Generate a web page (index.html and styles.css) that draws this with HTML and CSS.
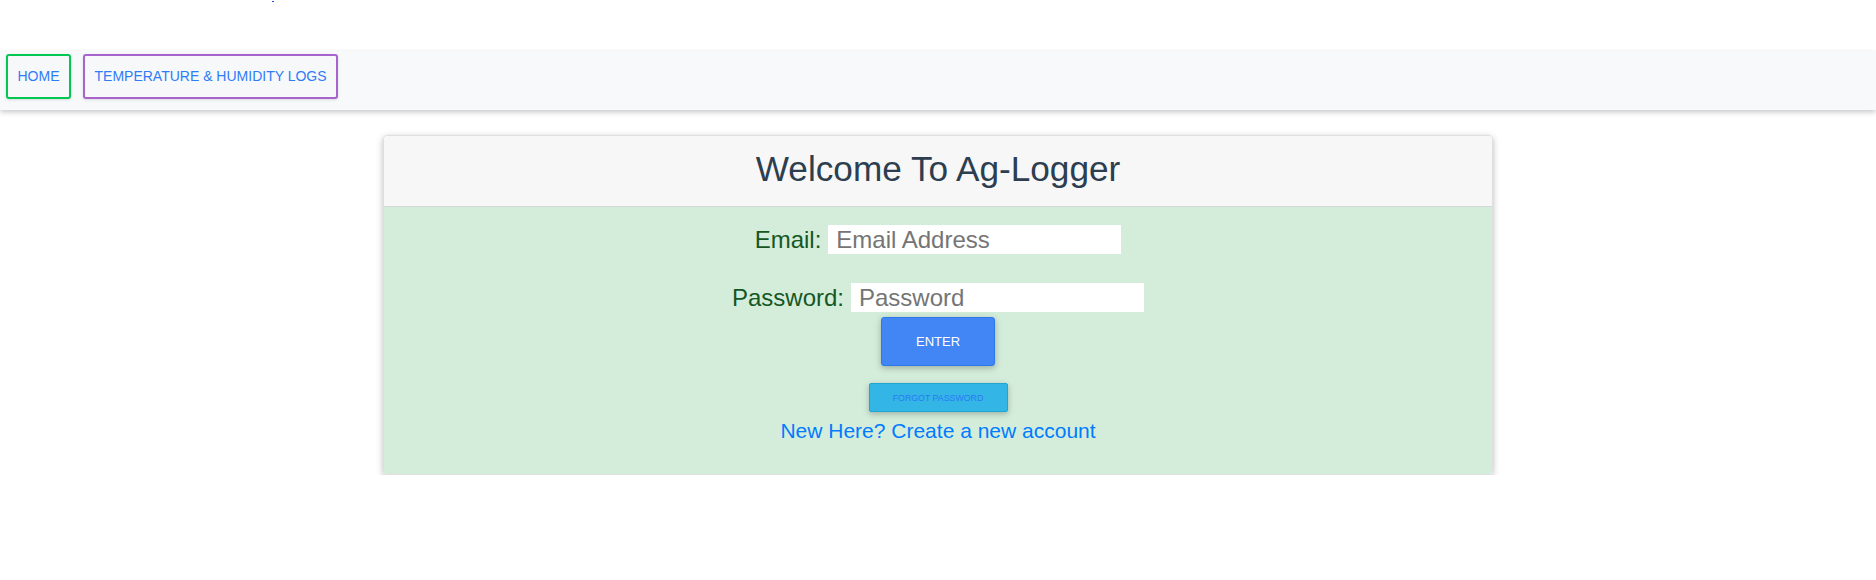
FILE: index.html
```html
<!DOCTYPE html>
<html lang="en">
<head>
<meta charset="utf-8">
<title>Ag-Logger</title>
<link rel="stylesheet" href="styles.css">
</head>
<body>
<div class="topbar"><span class="dot"></span></div>
<nav class="navbar">
  <a class="nav-btn nav-home" href="#">HOME</a>
  <a class="nav-btn nav-logs" href="#">TEMPERATURE &amp; HUMIDITY LOGS</a>
</nav>
<main class="container">
  <section class="card">
    <header class="card-header">
      <h1 class="title">Welcome To Ag-Logger</h1>
    </header>
    <form class="card-body">
      <div class="field">
        <label class="field-label" for="email">Email:</label>
        <input class="field-input" id="email" type="text" placeholder="Email Address">
      </div>
      <div class="field field-password">
        <label class="field-label" for="password">Password:</label>
        <input class="field-input" id="password" type="password" placeholder="Password">
      </div>
      <button class="btn-enter" type="button">ENTER</button>
      <button class="btn-forgot" type="button">FORGOT PASSWORD</button>
      <a class="new-link" href="#">New Here? Create a new account</a>
    </form>
  </section>
</main>
</body>
</html>
```

FILE: styles.css
```css
* {
  box-sizing: border-box;
}

body {
  margin: 0;
  background: #ffffff;
  font-family: "Liberation Sans", Arial, sans-serif;
}

.topbar {
  height: 51px;
  padding-left: 272px;
  padding-top: 1px;
}

.dot {
  display: block;
  width: 2px;
  height: 1px;
  background: #2b3bd6;
}

.navbar {
  height: 59px;
  background: #f8f9fa;
  display: flex;
  align-items: flex-start;
  gap: 12px;
  padding: 3px 0 0 6px;
  box-shadow: 0 2px 5px 0 rgba(0, 0, 0, 0.16), 0 3px 6px 0 rgba(0, 0, 0, 0.06);
  position: relative;
  z-index: 1;
}

.nav-btn {
  display: block;
  height: 45px;
  line-height: 41px;
  padding: 0 9.5px;
  border: 2px solid;
  border-radius: 3px;
  font-size: 14px;
  color: #2f7cf6;
  text-decoration: none;
  background: #f7f8fa;
  box-shadow: 0 1px 3px rgba(0, 0, 0, 0.12);
}

.nav-home {
  border-color: #00c853;
}

.nav-logs {
  border-color: #a864cd;
}

.container {
  width: 1110px;
  margin: 25px auto 0;
}

.card {
  border: 1px solid rgba(0, 0, 0, 0.125);
  border-radius: 4px;
  overflow: hidden;
  box-shadow: 0 2px 5px 0 rgba(0, 0, 0, 0.16), 0 2px 10px 0 rgba(0, 0, 0, 0.12);
}

.card-header {
  height: 71px;
  background: #f7f7f7;
  border-bottom: 1px solid rgba(0, 0, 0, 0.125);
  padding-top: 13px;
  text-align: center;
}

.title {
  margin: 0;
  font-size: 35.2px;
  font-weight: 400;
  color: #2c3e50;
  line-height: 40px;
}

.card-body {
  background: #d4edda;
  display: flex;
  flex-direction: column;
  align-items: center;
  padding: 18px 0 31px;
  margin: 0;
}

.field {
  display: flex;
  align-items: center;
  gap: 7px;
  height: 29px;
}

.field-password {
  margin-top: 29px;
}

.field-label {
  font-size: 24px;
  color: #155724;
}

.field-input {
  width: 293px;
  height: 29px;
  border: none;
  padding: 0 8px;
  background: #ffffff;
  font-family: "Liberation Sans", Arial, sans-serif;
  font-size: 24px;
  color: #333;
  outline: none;
}

.field-input::placeholder {
  color: #757575;
}

.btn-enter {
  margin-top: 5px;
  padding: 14px 34px;
  line-height: 19px;
  font-family: "Liberation Sans", Arial, sans-serif;
  font-size: 13px;
  color: #ffffff;
  background: #4285f4;
  border: 1px solid #2f78ec;
  border-radius: 3px;
  box-shadow: 0 2px 5px 0 rgba(0, 0, 0, 0.16), 0 2px 10px 0 rgba(0, 0, 0, 0.12);
  cursor: pointer;
}

.btn-forgot {
  margin-top: 17px;
  width: 139px;
  height: 29px;
  padding: 0;
  font-family: "Liberation Sans", Arial, sans-serif;
  font-size: 8.8px;
  color: #2a7af5;
  background: #33b5e5;
  border: 1px solid #21a6d4;
  border-radius: 2px;
  box-shadow: 0 2px 5px 0 rgba(0, 0, 0, 0.16), 0 2px 8px 0 rgba(0, 0, 0, 0.1);
  cursor: pointer;
}

.new-link {
  margin-top: 7px;
  font-size: 21px;
  color: #007bff;
  text-decoration: none;
}
```
